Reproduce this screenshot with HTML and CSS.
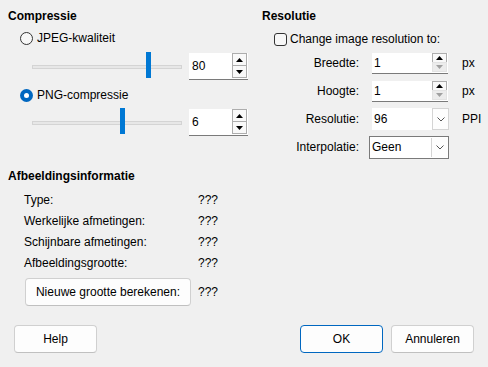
FILE: index.html
```html
<!DOCTYPE html>
<html>
<head>
<meta charset="utf-8">
<link rel="stylesheet" href="styles.css">
</head>
<body>
<div class="dialog">
  <div class="top">
    <section class="compress">
      <div class="title">Compressie</div>
      <div class="radio-row"><span class="radio"></span><span>JPEG-kwaliteit</span></div>
      <div class="slider-row">
        <div class="slider"><div class="track"></div><div class="thumb" style="left:114px"></div></div>
        <div class="spin">
          <span class="spin-value">80</span>
          <span class="spin-btns">
            <span class="sb"><svg width="7" height="4" viewBox="0 0 7 4"><polygon points="0,4 7,4 3.5,0" fill="#000"/></svg></span>
            <span class="sb"><svg width="7" height="4" viewBox="0 0 7 4"><polygon points="0,0 7,0 3.5,4" fill="#000"/></svg></span>
          </span>
        </div>
      </div>
      <div class="radio-row second"><span class="radio checked"></span><span>PNG-compressie</span></div>
      <div class="slider-row second">
        <div class="slider"><div class="track"></div><div class="thumb" style="left:88px"></div></div>
        <div class="spin">
          <span class="spin-value">6</span>
          <span class="spin-btns">
            <span class="sb"><svg width="7" height="4" viewBox="0 0 7 4"><polygon points="0,4 7,4 3.5,0" fill="#000"/></svg></span>
            <span class="sb"><svg width="7" height="4" viewBox="0 0 7 4"><polygon points="0,0 7,0 3.5,4" fill="#000"/></svg></span>
          </span>
        </div>
      </div>
    </section>
    <section class="resol">
      <div class="title">Resolutie</div>
      <div class="check-row"><span class="checkbox"></span><span>Change image resolution to:</span></div>
      <div class="form">
        <span class="lbl">Breedte:</span>
        <div class="spin small">
          <span class="spin-value">1</span>
          <span class="spin-btns">
            <span class="sb on"><svg width="7" height="4" viewBox="0 0 7 4"><polygon points="0,4 7,4 3.5,0" fill="#000"/></svg></span>
            <span class="sb off"><svg width="7" height="4" viewBox="0 0 7 4"><polygon points="0,0 7,0 3.5,4" fill="#a0a0a0"/></svg></span>
          </span>
        </div>
        <span class="unit">px</span>

        <span class="lbl">Hoogte:</span>
        <div class="spin small">
          <span class="spin-value">1</span>
          <span class="spin-btns">
            <span class="sb on"><svg width="7" height="4" viewBox="0 0 7 4"><polygon points="0,4 7,4 3.5,0" fill="#000"/></svg></span>
            <span class="sb off"><svg width="7" height="4" viewBox="0 0 7 4"><polygon points="0,0 7,0 3.5,4" fill="#a0a0a0"/></svg></span>
          </span>
        </div>
        <span class="unit">px</span>

        <span class="lbl">Resolutie:</span>
        <div class="combo edit">
          <span class="combo-value">96</span>
          <span class="combo-btn"><svg width="8" height="5" viewBox="0 0 8 5"><polyline points="0.5,0.5 4,4 7.5,0.5" fill="none" stroke="#555" stroke-width="1"/></svg></span>
        </div>
        <span class="unit">PPI</span>

        <span class="lbl">Interpolatie:</span>
        <div class="combo list">
          <span class="combo-value">Geen</span>
          <span class="combo-btn"><svg width="8" height="5" viewBox="0 0 8 5"><polyline points="0.5,0.5 4,4 7.5,0.5" fill="none" stroke="#555" stroke-width="1"/></svg></span>
        </div>
        <span class="unit"></span>
      </div>
    </section>
  </div>

  <section class="info">
    <div class="title">Afbeeldingsinformatie</div>
    <div class="info-grid">
      <span>Type:</span><span>???</span>
      <span>Werkelijke afmetingen:</span><span>???</span>
      <span>Schijnbare afmetingen:</span><span>???</span>
      <span>Afbeeldingsgrootte:</span><span>???</span>
      <button class="btn calc">Nieuwe grootte berekenen:</button><span class="calc-val">???</span>
    </div>
  </section>

  <div class="footer">
    <button class="btn">Help</button>
    <div class="footer-right">
      <button class="btn default">OK</button>
      <button class="btn">Annuleren</button>
    </div>
  </div>
</div>
</body>
</html>
```
FILE: styles.css
```css
* { box-sizing: border-box; }
html, body { margin: 0; padding: 0; }
body {
  width: 488px;
  height: 367px;
  overflow: hidden;
  background: #f0f0f0;
  font-family: "Liberation Sans", Arial, sans-serif;
  font-size: 12px;
  color: #000;
}
.dialog { padding-top: 8px; }
.top { display: flex; height: 153px; }
.compress { width: 254px; padding-left: 8px; }
.resol { flex: 1; padding-left: 8px; }
.title { font-weight: bold; line-height: 16px; height: 16px; }

.radio-row {
  display: flex; align-items: center; gap: 4px;
  height: 16px; margin-top: 6px; padding-left: 12px;
}
.radio-row.second { margin-top: 7px; }
.radio {
  width: 13px; height: 13px; border-radius: 50%;
  border: 1px solid #333; background: #f7f7f7;
  flex: none;
}
.radio.checked {
  border: none; background: #0067c0;
  display: flex; align-items: center; justify-content: center;
}
.radio.checked::after {
  content: ""; width: 5px; height: 5px; border-radius: 50%; background: #fff;
}

.slider-row {
  display: flex; align-items: center; gap: 7px;
  height: 27px; margin-top: 7px; padding-left: 24px;
}
.slider-row.second { margin-top: 6px; }
.slider {
  position: relative; width: 150px; height: 27px;
  display: flex; align-items: center;
}
.track {
  width: 100%; height: 4px;
  background: #e7e7e7; border: 1px solid #d4d4d4;
}
.thumb {
  position: absolute; top: -1px; width: 5px; height: 26px;
  background: #0078d4;
}

.spin {
  display: flex; width: 59px; height: 27px;
  background: #fff; border-bottom: 1px solid #7a7a7a;
}
.spin-value { flex: 1; padding-left: 3px; display: flex; align-items: center; }
.spin-btns { display: flex; flex-direction: column; width: 16px; padding-right: 1px; }
.sb {
  width: 15px; height: 13px;
  border: 1px solid #adadad; background: #f9f9f9;
  display: flex; align-items: center; justify-content: center;
}
.sb + .sb { margin-top: -1px; }

.check-row {
  display: flex; align-items: center; gap: 3px;
  height: 16px; margin-top: 7px; padding-left: 12px;
}
.checkbox {
  width: 13px; height: 13px; border: 1px solid #333; border-radius: 3px;
  background: #f7f7f7; flex: none;
}

.form {
  display: grid;
  grid-template-columns: 97px 80px auto;
  grid-auto-rows: 28px;
  column-gap: 10px;
  align-items: center;
  margin-top: 2px;
}
.lbl { text-align: right; }
.unit { padding-left: 3px; }
.spin.small { width: 76px; height: 21px; margin-left: 3px; }
.spin.small .spin-value { padding-left: 2px; }
.spin.small .sb { height: 10px; }
.spin.small .sb.off { border-color: #e3e3e3; background: #ececec; }

.combo {
  display: flex; background: #fff; height: 22px;
}
.combo.edit { width: 77px; margin-left: 3px; }
.combo.list { width: 80px; height: 23px; border: 1px solid #7a7a7a; }
.combo-value { flex: 1; padding-left: 2px; display: flex; align-items: center; }
.combo-btn {
  width: 17px; border: 1px solid #d4d4d4; background: #fdfdfd;
  display: flex; align-items: center; justify-content: center;
}
.combo.list .combo-btn { width: 16px; border-width: 0 0 0 1px; margin: 1px; }

.info { margin-top: 7px; padding-left: 8px; }
.info-grid {
  display: grid;
  grid-template-columns: 174px auto;
  grid-template-rows: repeat(4, 21px) auto;
  align-items: center;
  padding-left: 16px;
  margin-top: 5px;
}
.btn {
  height: 28px; width: 83px;
  border: 1px solid #d0d0d0; border-bottom-color: #c0c0c0; border-radius: 4px;
  background: #fdfdfd;
  font-family: inherit; font-size: 12px; color: #000;
  padding: 0;
}
.btn.calc { width: 166px; margin-left: 1px; margin-top: 5px; }
.calc-val { margin-top: 5px; }
.btn.default { border: 1px solid #0067c0; }

.footer {
  display: flex; justify-content: space-between;
  padding: 0 14px; margin-top: 19px;
}
.footer-right { display: flex; gap: 8px; }
```
